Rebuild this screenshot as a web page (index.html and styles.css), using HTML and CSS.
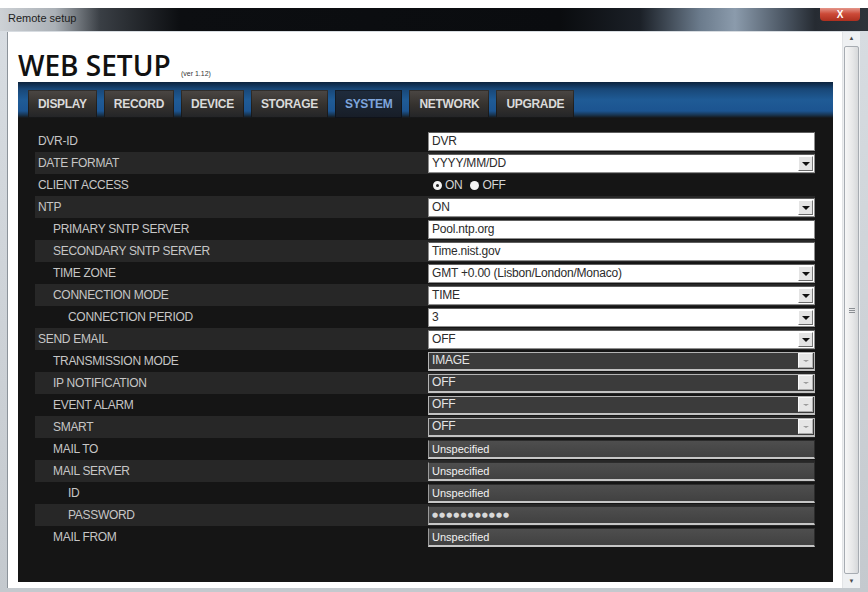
FILE: index.html
```html
<!DOCTYPE html>
<html lang="en">
<head>
    <meta charset="UTF-8">
    <title>Remote setup</title>
    <link rel="stylesheet" href="styles.css">
</head>
<body>
    <div class="top-strip"></div>

    <div class="window">
        <div class="titlebar">
            <span class="title">Remote setup</span>
            <span class="close">X</span>
        </div>

        <div class="frame">
            <div class="client">
                <h1>WEB SETUP <small>(ver 1.12)</small></h1>

                <div class="panel">
                    <ul class="tabs">
                        <li class="tab">DISPLAY</li>
                        <li class="tab">RECORD</li>
                        <li class="tab">DEVICE</li>
                        <li class="tab">STORAGE</li>
                        <li class="tab active">SYSTEM</li>
                        <li class="tab">NETWORK</li>
                        <li class="tab">UPGRADE</li>
                    </ul>

                    <div class="rows">
                        <div class="row">
                            <span class="label">DVR-ID</span>
                            <div class="box">DVR</div>
                        </div>
                        <div class="row">
                            <span class="label">DATE FORMAT</span>
                            <div class="box select"><span>YYYY/MM/DD</span><i class="arrow"></i></div>
                        </div>
                        <div class="row">
                            <span class="label">CLIENT ACCESS</span>
                            <div class="radios">
                                <span class="radio checked"></span><span>ON</span>
                                <span class="radio"></span><span>OFF</span>
                            </div>
                        </div>
                        <div class="row">
                            <span class="label">NTP</span>
                            <div class="box select"><span>ON</span><i class="arrow"></i></div>
                        </div>
                        <div class="row">
                            <span class="label sub">PRIMARY SNTP SERVER</span>
                            <div class="box">Pool.ntp.org</div>
                        </div>
                        <div class="row">
                            <span class="label sub">SECONDARY SNTP SERVER</span>
                            <div class="box">Time.nist.gov</div>
                        </div>
                        <div class="row">
                            <span class="label sub">TIME ZONE</span>
                            <div class="box select"><span>GMT +0.00 (Lisbon/London/Monaco)</span><i class="arrow"></i></div>
                        </div>
                        <div class="row">
                            <span class="label sub">CONNECTION MODE</span>
                            <div class="box select"><span>TIME</span><i class="arrow"></i></div>
                        </div>
                        <div class="row">
                            <span class="label sub2">CONNECTION PERIOD</span>
                            <div class="box select"><span>3</span><i class="arrow"></i></div>
                        </div>
                        <div class="row">
                            <span class="label">SEND EMAIL</span>
                            <div class="box select"><span>OFF</span><i class="arrow"></i></div>
                        </div>
                        <div class="row">
                            <span class="label sub">TRANSMISSION MODE</span>
                            <div class="box select off"><span>IMAGE</span><i class="arrow"></i></div>
                        </div>
                        <div class="row">
                            <span class="label sub">IP NOTIFICATION</span>
                            <div class="box select off"><span>OFF</span><i class="arrow"></i></div>
                        </div>
                        <div class="row">
                            <span class="label sub">EVENT ALARM</span>
                            <div class="box select off"><span>OFF</span><i class="arrow"></i></div>
                        </div>
                        <div class="row">
                            <span class="label sub">SMART</span>
                            <div class="box select off"><span>OFF</span><i class="arrow"></i></div>
                        </div>
                        <div class="row">
                            <span class="label sub">MAIL TO</span>
                            <div class="box text-off">Unspecified</div>
                        </div>
                        <div class="row">
                            <span class="label sub">MAIL SERVER</span>
                            <div class="box text-off">Unspecified</div>
                        </div>
                        <div class="row">
                            <span class="label sub2">ID</span>
                            <div class="box text-off">Unspecified</div>
                        </div>
                        <div class="row">
                            <span class="label sub2">PASSWORD</span>
                            <div class="box text-off dots">●●●●●●●●●●●</div>
                        </div>
                        <div class="row">
                            <span class="label sub">MAIL FROM</span>
                            <div class="box text-off">Unspecified</div>
                        </div>
                    </div>
                </div>
            </div>

            <div class="scrollbar">
                <span class="scroll-btn">&#9650;</span>
                <div class="thumb"><span class="grip"></span></div>
                <span class="scroll-btn">&#9660;</span>
            </div>
        </div>
    </div>
</body>
</html>
```

FILE: styles.css
```css
body {
    margin: 0;
    width: 868px;
    height: 592px;
    overflow: hidden;
    background: #fff;
    font-family: "Liberation Sans", Arial, sans-serif;
}

.top-strip {
    height: 8px;
    background: #fff;
}

/* window chrome */
.window {
    display: flex;
    flex-direction: column;
    height: 584px;
}
.titlebar {
    height: 23px;
    display: flex;
    justify-content: space-between;
    align-items: flex-start;
    background: linear-gradient(to right, #cdd1d5 0, #aab0b6 55px, #3a3f45 100px, #0c0e11 180px, #0a0c0f 560px, #1b2027 640px, #6b7b8c 700px, #8b9bac 735px, #4a5562 785px, #262b32 815px, #2e333a 868px);
}
.title {
    padding: 4px 0 0 8px;
    font-size: 11px;
    color: #1c1c1c;
}
.close {
    width: 40px;
    height: 13px;
    margin-right: 8px;
    background: linear-gradient(#e4968a, #cc4a38 45%, #ad2f1f);
    border-radius: 0 0 4px 4px;
    color: #fff;
    font-size: 10px;
    font-weight: bold;
    line-height: 13px;
    text-align: center;
}
.frame {
    flex: 1;
    display: flex;
    padding: 1px 7px 4px 7px;
    background: linear-gradient(#d7dce1, #c4c9ce);
}
.client {
    width: 835px;
    padding: 0 10px;
    box-sizing: border-box;
    border-left: 1px solid #8c939a;
    background: #fff;
}

h1 {
    height: 30px;
    margin: 18px 0 2px;
    line-height: 30px;
    font-family: "Open Sans", sans-serif;
    font-size: 28px;
    font-weight: 600;
    color: #111;
}
h1 small {
    margin-left: 3px;
    line-height: 0;
    font-family: "Liberation Sans", Arial, sans-serif;
    font-size: 7px;
    font-weight: normal;
    color: #333;
}

/* dark panel */
.panel {
    width: 815px;
    height: 500px;
    background: #151515;
}
.tabs {
    display: flex;
    gap: 7px;
    height: 36px;
    margin: 0;
    padding: 8px 10px 0;
    box-sizing: border-box;
    list-style: none;
    background: linear-gradient(#0d233d 0, #184777 7px, #1f5b96 18px, #1c5490 29px, #183450 33px, #151515 36px);
}
.tab {
    padding: 0 10px;
    line-height: 29px;
    font-size: 12px;
    font-weight: bold;
    letter-spacing: -0.3px;
    color: #dadada;
    background: linear-gradient(#4b4744, #36332f 50%, #232427);
    box-shadow: inset 0 0 0 1px rgba(0, 0, 0, 0.35);
}
.tab.active {
    color: #7ea5dc;
    background: linear-gradient(#1f2c3d, #171d27);
}

.rows {
    margin: 12px 18px 0 17px;
}
.row {
    display: flex;
    align-items: center;
    height: 22px;
}
.row:nth-child(even) {
    background: #272727;
}
.label {
    width: 393px;
    flex-shrink: 0;
    padding-left: 3px;
    box-sizing: border-box;
    font-size: 12px;
    letter-spacing: -0.3px;
    color: #c6c6c6;
    white-space: nowrap;
}
.label.sub {
    padding-left: 18px;
}
.label.sub2 {
    padding-left: 33px;
}

/* fields */
.box {
    flex: 1;
    height: 19px;
    padding-left: 3px;
    box-sizing: border-box;
    border: 1px solid #8e8e8e;
    border-top-color: #5e5e5e;
    background: #fff;
    font-size: 12px;
    line-height: 17px;
    letter-spacing: -0.2px;
    color: #2b2b2b;
    white-space: nowrap;
}
.select {
    display: flex;
    justify-content: space-between;
    align-items: center;
    padding-right: 1px;
}
.arrow {
    display: flex;
    align-items: center;
    justify-content: center;
    width: 15px;
    height: 15px;
    box-sizing: border-box;
    border: 1px solid;
    border-color: #fff #7a7a7a #6a6a6a #fff;
    background: #e4e4e4;
}
.arrow::after {
    content: "";
    margin-top: 2px;
    border-left: 4px solid transparent;
    border-right: 4px solid transparent;
    border-top: 4px solid #111;
}
.select.off {
    border-color: #b4b4b4;
    border-bottom: 2px solid #c2c2c2;
    background: #3b3b3b;
    color: #e4e4e4;
}
.select.off .arrow {
    background: #e6e6e6;
    border-color: #fafafa #b0b0b0 #a8a8a8 #fafafa;
}
.select.off .arrow::after {
    margin-top: 0;
    border-left-width: 3px;
    border-right-width: 3px;
    border-top: 2px solid #9c9c9c;
}
.text-off {
    border-color: #2c2c2c #2c2c2c #c6c6c6 #9a9a9a;
    border-bottom-width: 2px;
    background: linear-gradient(#4e4e4e, #414141);
    font-size: 11px;
    letter-spacing: 0;
    color: #f2f2f2;
}
.dots {
    font-family: "DejaVu Sans", sans-serif;
    font-size: 7px;
    letter-spacing: 1px;
    color: #d8d8d8;
}

.radios {
    display: flex;
    align-items: center;
    gap: 3px;
    padding-left: 5px;
    font-size: 12px;
    letter-spacing: -0.3px;
    color: #d4d4d4;
}
.radio {
    width: 9px;
    height: 9px;
    box-sizing: border-box;
    border-radius: 50%;
    background: #f4f4f4;
}
.radio.checked {
    border: 3px solid #f4f4f4;
    background: #222;
}
.radios span + .radio {
    margin-left: 5px;
}

/* scrollbar */
.scrollbar {
    width: 18px;
    display: flex;
    flex-direction: column;
    align-items: center;
    background: #eef0f2;
    border-left: 1px solid #e2e4e6;
    box-sizing: border-box;
}
.scroll-btn {
    height: 13px;
    font-size: 6px;
    line-height: 13px;
    color: #4a4a4a;
}
.thumb {
    flex: 1;
    width: 15px;
    margin: 1px 0;
    display: flex;
    align-items: center;
    justify-content: center;
    box-sizing: border-box;
    border: 1px solid #a7acb2;
    border-radius: 2px;
    background: linear-gradient(to right, #f7f7f7, #e6e7e8 60%, #d6d8da);
}
.grip {
    width: 6px;
    height: 5px;
    border-top: 1px solid #8a8e93;
    border-bottom: 1px solid #8a8e93;
    box-sizing: border-box;
    background: linear-gradient(transparent 1px, #8a8e93 1px, #8a8e93 2px, transparent 2px);
}
```
